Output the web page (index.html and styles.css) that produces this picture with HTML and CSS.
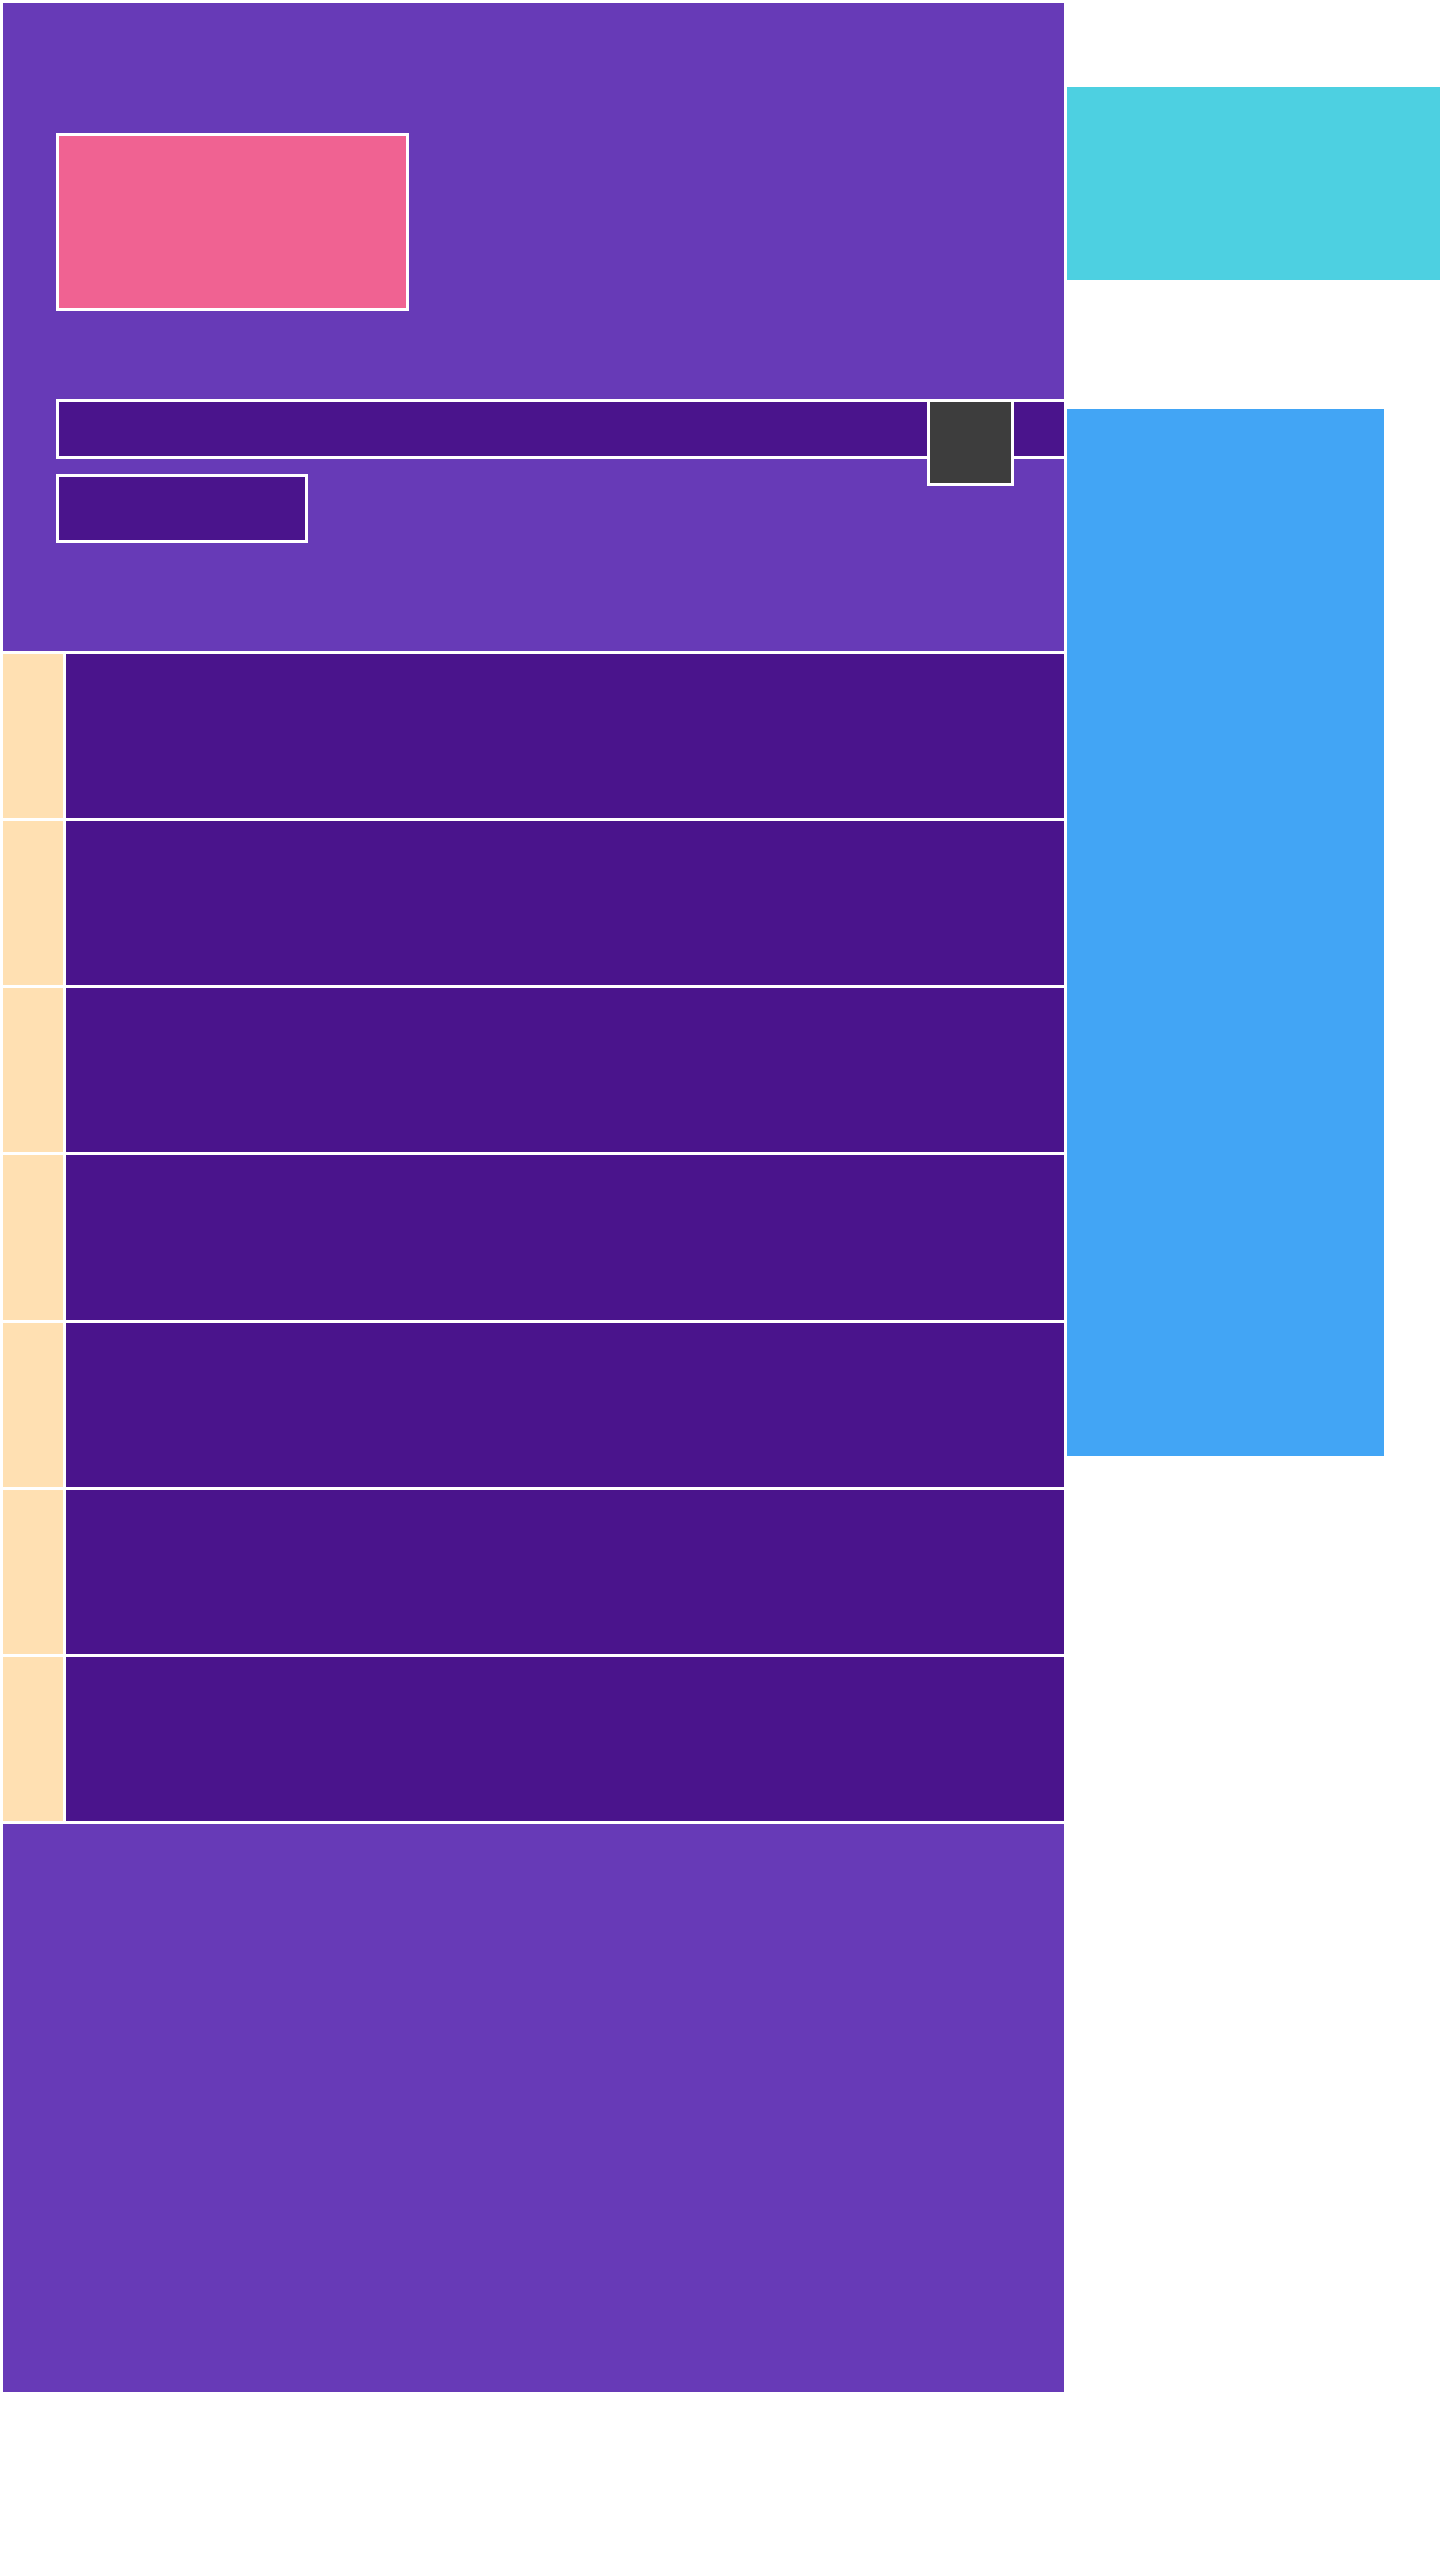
FILE: index.html
```html
<!DOCTYPE html>
<html lang="en">
<head>
<meta charset="utf-8">
<title>Layout</title>
<link rel="stylesheet" href="styles.css">
</head>
<body>
<div class="page">
  <main class="main">
    <section class="hero">
      <div class="hero-card"></div>
      <div class="search-bar">
        <div class="search-badge"></div>
      </div>
      <div class="hero-button"></div>
    </section>
    <section class="rows">
      <div class="row"><div class="row-mark"></div><div class="row-body"></div></div>
      <div class="row"><div class="row-mark"></div><div class="row-body"></div></div>
      <div class="row"><div class="row-mark"></div><div class="row-body"></div></div>
      <div class="row"><div class="row-mark"></div><div class="row-body"></div></div>
      <div class="row"><div class="row-mark"></div><div class="row-body"></div></div>
      <div class="row"><div class="row-mark"></div><div class="row-body"></div></div>
      <div class="row"><div class="row-mark"></div><div class="row-body"></div></div>
    </section>
    <footer class="footer"></footer>
  </main>
  <aside class="side">
    <div class="side-banner"></div>
    <div class="side-panel"></div>
  </aside>
</div>
</body>
</html>
```
FILE: styles.css
```css
html, body {
  margin: 0;
  padding: 0;
  background: #ffffff;
  font-family: "Liberation Sans", Arial, sans-serif;
}

.page {
  display: flex;
  gap: 3px;
  padding: 3px 0 0 3px;
  width: 1440px;
  box-sizing: border-box;
  align-items: flex-start;
}

.main {
  width: 1061px;
  flex: 0 0 1061px;
  display: flex;
  flex-direction: column;
  gap: 3px;
}

.hero {
  height: 648px;
  background: #673ab7;
  display: flex;
  flex-direction: column;
  padding: 130px 0 0 53px;
  box-sizing: border-box;
  overflow: hidden;
}

.hero-card {
  width: 353px;
  height: 178px;
  box-sizing: border-box;
  border: 3px solid #ffffff;
  background: #f06292;
}

.search-bar {
  position: relative;
  margin-top: 88px;
  height: 60px;
  box-sizing: border-box;
  border: 3px solid #ffffff;
  border-right: 0;
  background: #4a148c;
}

.search-badge {
  position: absolute;
  left: 868px;
  top: -3px;
  width: 87px;
  height: 87px;
  box-sizing: border-box;
  border: 3px solid #ffffff;
  background: #3d3d3d;
}

.hero-button {
  margin-top: 15px;
  width: 252px;
  height: 69px;
  box-sizing: border-box;
  border: 3px solid #ffffff;
  background: #4a148c;
}

.rows {
  height: 1167px;
  display: grid;
  grid-template-rows: repeat(7, 1fr);
  gap: 3px;
}

.row {
  display: flex;
  gap: 3px;
}

.row-mark {
  width: 60px;
  flex: 0 0 60px;
  background: #ffe0b2;
}

.row-body {
  flex: 1;
  background: #4a148c;
}

.footer {
  height: 568px;
  background: #673ab7;
}

.side {
  width: 373px;
  flex: 0 0 373px;
  display: flex;
  flex-direction: column;
}

.side-banner {
  margin-top: 84px;
  height: 193px;
  background: #4dd0e1;
}

.side-panel {
  margin-top: 129px;
  width: 317px;
  height: 1047px;
  background: #42a5f5;
}
```
